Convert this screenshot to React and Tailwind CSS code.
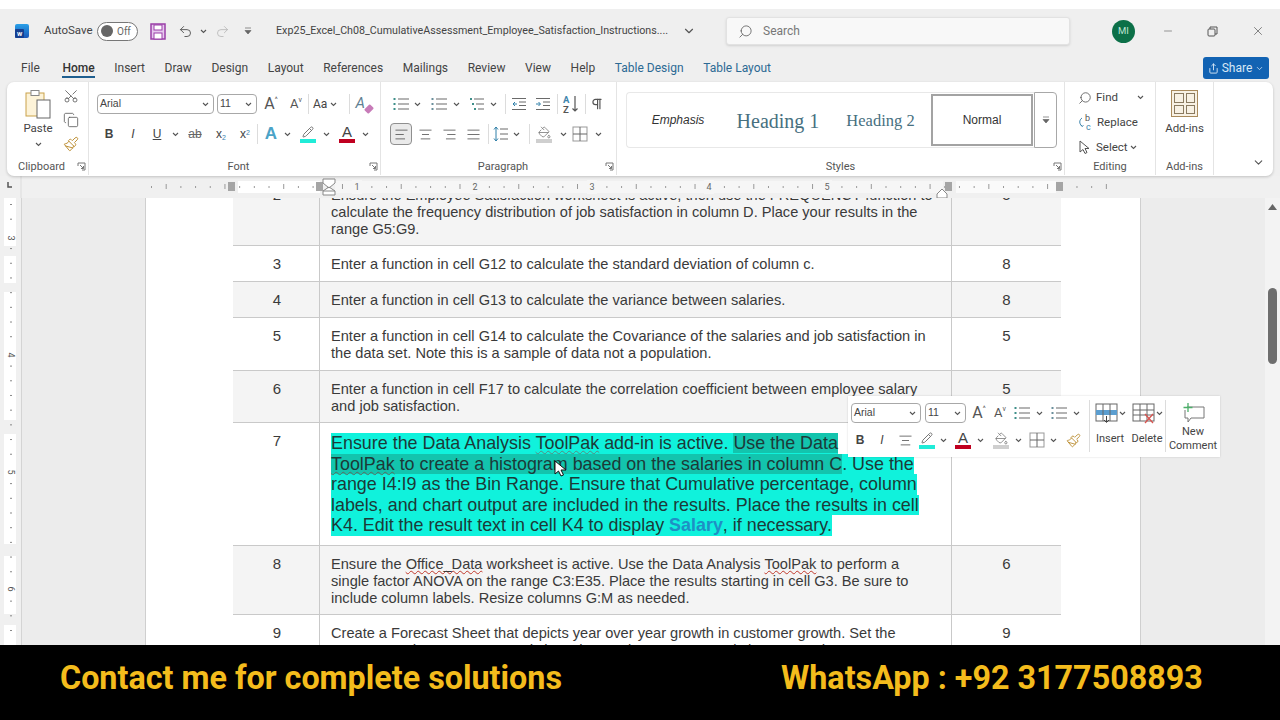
import React from 'react';
import { Search, Minus, X, Scissors, Copy, Paintbrush, ChevronDown, Share, Pilcrow, Pencil, PaintBucket, AlignLeft, AlignCenter, AlignRight, AlignJustify, Undo2, Redo2 } from 'lucide-react';

const Chev = ({ className = '' }) => (
  <svg width="7" height="5" viewBox="0 0 7 5" className={className}>
    <path d="M1 1l2.5 2.5L6 1" fill="none" stroke="#555" strokeWidth="1.1" />
  </svg>
);

const Launcher = () => (
  <svg width="9" height="9" viewBox="0 0 9 9" className="absolute right-[2px] top-[3px]">
    <path d="M1 4V1h7v7H5" fill="none" stroke="#777" />
    <path d="M3 3l3.5 3.5M6.5 4v2.5H4" fill="none" stroke="#777" />
  </svg>
);

const Sep = ({ className = 'h-[22px]' }) => <div className={`w-px bg-[#dcdcdc] ${className}`} />;

const Cell = ({ className = 'w-[24px]', children }) => (
  <div className={`flex items-center justify-center shrink-0 ${className}`}>{children}</div>
);

const ListIcon = ({ nums = false, indent = false }) => (
  <svg width="16" height="16" viewBox="0 0 16 16">
    {[3, 8, 13].map((y, i) => (
      <g key={y}>
        <rect x={indent ? i * 2 : 0.5} y={y - 1} width="2" height="2" fill={nums ? '#6b8f9c' : '#3f8f8a'} />
        <rect x={indent ? i * 2 + 4 : 5} y={y - 0.5} width={indent ? 10 - i * 2 : 11} height="1" fill="#6a6a6a" />
      </g>
    ))}
  </svg>
);

const IndentIcon = ({ inc = false }) => (
  <svg width="16" height="14" viewBox="0 0 16 14">
    <path d="M1 1.5h14M8 5h7M8 8.5h7M1 12.5h14" stroke="#6a6a6a" fill="none" />
    <path d={inc ? 'M1 7h4M3.5 5l2 2-2 2' : 'M6 7H2M4 5L2 7l2 2'} stroke="#2f7fa8" fill="none" />
  </svg>
);

const GridIcon = () => (
  <svg width="16" height="16" viewBox="0 0 16 16">
    <rect x="1" y="1" width="14" height="14" fill="none" stroke="#999" />
    <path d="M8 1v14M1 8h14" stroke="#666" />
  </svg>
);

const LineSpacing = () => (
  <svg width="16" height="16" viewBox="0 0 16 16">
    <path d="M3 1v14M1 3.500L3 1l2 2.500M1 12.500L3 15l2-2.500" fill="none" stroke="#2f7fa8" />
    <path d="M7 3h8M7 8h8M7 13h8" stroke="#6a6a6a" />
  </svg>
);

const SortIcon = () => (
  <svg width="18" height="20" viewBox="0 0 18 20">
    <text x="1" y="9" fontSize="9.500" fontWeight="700" fill="#3f86ad" fontFamily="Roboto, sans-serif">A</text>
    <text x="1" y="18.500" fontSize="9.500" fontWeight="700" fill="#555" fontFamily="Roboto, sans-serif">Z</text>
    <path d="M13 2v15M10.500 14.500L13 17l2.500-2.500" fill="none" stroke="#555" strokeWidth="1.200" />
  </svg>
);

const ClearFormat = () => (
  <div className="relative w-[17px] h-[17px]">
    <span className="absolute left-0 top-[-1px] text-[15px] leading-[17px] italic text-[#5f7f92]">A</span>
    <div className="absolute right-0 bottom-[1px] w-[8px] h-[6px] -rotate-45 rounded-[1px] bg-[#c77bb8]" />
  </div>
);

const ReplaceIcon = () => (
  <svg width="15" height="17" viewBox="0 0 15 17">
    <text x="7" y="7" fontSize="9" fill="#555" fontFamily="Roboto, sans-serif">b</text>
    <text x="8" y="15.500" fontSize="9" fill="#3f86ad" fontFamily="Roboto, sans-serif">c</text>
    <path d="M4 4C1 6 1 10 4 12M2.500 10.500L4 12.500l1.500-1" fill="none" stroke="#3f86ad" />
  </svg>
);

const ColorBar = ({ color, children }) => (
  <div className="flex flex-col items-center w-[18px]">
    <div className="h-[14px] flex items-center justify-center">{children}</div>
    <div className={`w-[16px] h-[4px] ${color}`} />
  </div>
);

const FontA = () => <span className="text-[15px] leading-[14px] text-[#444]">A</span>;

const Combo = ({ className, label }) => (
  <div className={`h-[20px] border border-[#a8a8a8] rounded-[4px] bg-white flex items-center justify-between pl-[2px] pr-[4px] text-[10.5px] text-[#444] font-['Liberation_Sans',sans-serif] ${className}`}>
    <span>{label}</span>
    <Chev />
  </div>
);

const GrowA = ({ small = false, mark }) => (
  <div className="flex items-start text-[#555]">
    <span className={small ? 'text-[13px] leading-[16px]' : 'text-[16px] leading-[16px]'}>A</span>
    <span className="text-[7px] leading-[8px]">{mark}</span>
  </div>
);

const GroupLabel = ({ children, launcher = false, className = '' }) => (
  <div className={`relative mt-auto h-[16px] flex items-center justify-center text-[11px] text-[#555] ${className}`}>
    {children}
    {launcher && <Launcher />}
  </div>
);

function TitleBar() {
  return (
    <div className="h-[40px] pt-[4px] bg-[#efefef] flex items-center text-[11.5px] text-[#444]">
      <div className="ml-[15px] w-[14px] h-[14px] rounded-[2px] bg-gradient-to-b from-[#2aa0e8] to-[#1b56b8] flex items-end">
        <span className="w-[9px] h-[9px] bg-[#153f91] rounded-[1px] text-white text-[6px] leading-[9px] text-center font-bold">W</span>
      </div>
      <span className="ml-[15px] w-[46px]">AutoSave</span>
      <div className="ml-[7px] w-[41px] h-[19px] rounded-full border border-[#777] bg-white flex items-center pl-[3px] gap-[4px]">
        <div className="w-[12px] h-[12px] rounded-full bg-[#666]" />
        <span className="text-[10px] text-[#666]">Off</span>
      </div>
      <svg width="16" height="17" viewBox="0 0 16 17" className="ml-[12px]">
        <rect x="1" y="1" width="14" height="15" fill="#e6c9ee" stroke="#9a3ea8" strokeWidth="1.5" />
        <rect x="4" y="2" width="8" height="5" fill="#fff" stroke="#9a3ea8" />
        <rect x="4" y="10" width="8" height="6" fill="#fff" stroke="#9a3ea8" />
      </svg>
      <Undo2 size={15} strokeWidth={1.5} className="ml-[12px] text-[#555]" />
      <Chev className="ml-[7px]" />
      <Redo2 size={15} strokeWidth={1.3} className="ml-[8px] text-[#b5b5b5]" />
      <svg width="8" height="8" viewBox="0 0 8 8" className="ml-[14px]">
        <path d="M1 1h6M1 3.5h6L4 7z" fill="#666" stroke="#666" strokeWidth="0.7" />
      </svg>
      <span className="ml-[24px] w-[399px] text-[10.7px] whitespace-nowrap overflow-hidden">Exp25_Excel_Ch08_CumulativeAssessment_Employee_Satisfaction_Instructions....</span>
      <ChevronDown size={14} className="ml-[7px] text-[#555]" />
      <div className="ml-[30px] w-[344px] h-[28px] bg-[#f8f8f8] border border-[#e2e2e2] rounded-[3px] shadow-sm flex items-center pl-[11px] gap-[10px] text-[12px] text-[#777]">
        <Search size={15} strokeWidth={1.4} className="-scale-x-100 text-[#666]" />
        <span>Search</span>
      </div>
      <div className="ml-[42px] w-[23px] h-[23px] rounded-full bg-[#0c7048] flex items-center justify-center text-[9.5px] text-[#bfe3d2]">MI</div>
      <Minus size={12} strokeWidth={1.2} className="ml-[27px] text-[#555]" />
      <svg width="11" height="11" viewBox="0 0 11 11" className="ml-[33px]">
        <rect x="1" y="3" width="7" height="7" rx="1" fill="none" stroke="#555" />
        <path d="M3 3V1h7v7H8" fill="none" stroke="#555" />
      </svg>
      <X size={14} strokeWidth={1.2} className="ml-[33px] text-[#555]" />
    </div>
  );
}

const tabs = ['File', 'Home', 'Insert', 'Draw', 'Design', 'Layout', 'References', 'Mailings', 'Review', 'View', 'Help'];

function TabBar() {
  return (
    <div className="h-[33px] pt-[5px] bg-[#efefef] flex items-center pl-[21px] gap-[19.6px] text-[12px] text-[#444] relative">
      {tabs.map((t, i) => (
        <div key={t} className={`relative ${i === 0 ? 'mr-[3px]' : ''} ${t === 'Home' ? 'font-medium text-[#333]' : ''}`}>
          {t}
          {t === 'Home' && <div className="absolute left-0 right-0 -bottom-[1px] h-[2px] bg-[#1f5f8f]" />}
        </div>
      ))}
      <span className="text-[#2c6a94]">Table Design</span>
      <span className="text-[#2c6a94]">Table Layout</span>
      <div className="ml-auto mr-[11px] w-[66px] h-[22px] rounded-[3px] bg-[#1263b3] text-[#d8e8f6] flex items-center justify-center gap-[3px]">
        <Share size={11} />
        <span>Share</span>
        <ChevronDown size={9} />
      </div>
    </div>
  );
}

function Ribbon() {
  return (
    <div className="relative z-10 mx-[7px] h-[94px] bg-white rounded-[7px] shadow-[0_1px_3px_rgba(0,0,0,0.2)] flex text-[#444]">
      {/* clipboard */}
      <div className="w-[82px] flex flex-col border-r border-[#e4e4e4] h-[93px]">
        <div className="flex h-[70px]">
          <div className="w-[50px] ml-[6px] flex flex-col items-center pt-[7px]">
            <svg width="28" height="31" viewBox="0 0 28 31">
              <rect x="2" y="4" width="18" height="23" fill="#fdf3d8" stroke="#c9a24a" />
              <rect x="7" y="1.5" width="8" height="5" fill="#fff" stroke="#888" />
              <rect x="13" y="11" width="13" height="18" fill="#fff" stroke="#666" />
            </svg>
            <span className="text-[11.500px] leading-[14px] mt-[1px]">Paste</span>
            <Chev className="mt-[7px]" />
          </div>
          <div className="flex flex-col items-center gap-[8px] pt-[6px]">
            <Scissors size={16} strokeWidth={1.2} className="-rotate-90 text-[#555]" />
            <Copy size={16} strokeWidth={1.2} className="text-[#555]" />
            <Paintbrush size={16} strokeWidth={1.4} className="text-[#b98a2c]" />
          </div>
        </div>
        <GroupLabel launcher className="pr-[12px]">Clipboard</GroupLabel>
      </div>
      {/* font */}
      <div className="w-[292px] flex flex-col pl-[8px] border-r border-[#e4e4e4] h-[93px]">
        <div className="flex items-center mt-[12px] h-[20px]">
          <Combo className="w-[117px]" label="Arial" />
          <Combo className="w-[40px] ml-[3px]" label="11" />
          <Cell className="w-[20px] ml-[4px]"><GrowA mark="^" /></Cell>
          <Cell className="w-[20px] ml-[5px]"><GrowA small mark="v" /></Cell>
          <Sep className="h-[20px] ml-[2px]" />
          <div className="w-[34px] ml-[4px] flex items-center gap-[3px] text-[12px]">Aa<Chev /></div>
          <Sep className="h-[20px] ml-[2px]" />
          <Cell className="w-[20px] ml-[4px]"><ClearFormat /></Cell>
        </div>
        <div className="flex items-center mt-[9px] h-[22px] text-[12px] font-['Liberation_Sans',sans-serif]">
          <Cell><span className="font-bold">B</span></Cell>
          <Cell><span className="italic">I</span></Cell>
          <Cell><span className="underline">U</span></Cell>
          <Cell className="w-[12px]"><Chev /></Cell>
          <Cell className="w-[24px] ml-[2px]"><span className="line-through text-[#666]">ab</span></Cell>
          <Cell className="w-[24px] ml-[2px]"><span>x<sub className="text-[7px] text-[#3b82b0]">2</sub></span></Cell>
          <Cell><span>x<sup className="text-[7px] text-[#3b82b0]">2</sup></span></Cell>
          <Sep className="h-[20px]" />
          <Cell className="w-[26px]"><span className="text-[17px] font-bold text-[#4ba3c7]">A</span></Cell>
          <Cell className="w-[12px] -ml-[3px]"><Chev /></Cell>
          <Cell className="w-[24px] ml-[3px]">
            <ColorBar color="bg-[#20ecd8]"><Pencil size={12} className="text-[#777]" /></ColorBar>
          </Cell>
          <Cell className="w-[12px]"><Chev /></Cell>
          <Cell className="w-[24px] ml-[3px]"><ColorBar color="bg-[#c00020]"><FontA /></ColorBar></Cell>
          <Cell className="w-[12px]"><Chev /></Cell>
        </div>
        <GroupLabel launcher>Font</GroupLabel>
      </div>
      {/* paragraph */}
      <div className="w-[236px] flex flex-col pl-[9px] border-r border-[#e4e4e4] h-[93px]">
        <div className="flex items-center mt-[14px] h-[16px]">
          <Cell className="w-[22px]"><ListIcon /></Cell>
          <Cell className="w-[12px] -ml-[1px] mr-[5px]"><Chev /></Cell>
          <Cell className="w-[22px]"><ListIcon nums /></Cell>
          <Cell className="w-[12px] mr-[5px]"><Chev /></Cell>
          <Cell className="w-[22px]"><ListIcon indent /></Cell>
          <Cell className="w-[12px] -ml-[2px]"><Chev /></Cell>
          <Sep className="h-[20px] ml-[6px]" />
          <Cell className="w-[24px] ml-[1px]"><IndentIcon /></Cell>
          <Cell className="w-[24px]"><IndentIcon inc /></Cell>
          <Sep className="h-[20px] ml-[2px]" />
          <Cell className="w-[26px]"><SortIcon /></Cell>
          <Sep className="h-[20px] ml-[1px]" />
          <Cell className="w-[22px]"><Pilcrow size={14} strokeWidth={2} className="text-[#555]" /></Cell>
        </div>
        <div className="flex items-center mt-[11px] h-[22px]">
          <Cell className="w-[22px] h-[22px] bg-[#eaeaea] border border-[#8f8f8f] rounded-[4px]"><AlignLeft size={15} strokeWidth={1.2} /></Cell>
          <Cell className="w-[24px] ml-[1px]"><AlignCenter size={15} strokeWidth={1.2} /></Cell>
          <Cell><AlignRight size={15} strokeWidth={1.2} /></Cell>
          <Cell><AlignJustify size={15} strokeWidth={1.2} /></Cell>
          <Sep className="h-[20px] ml-[3px]" />
          <Cell className="w-[22px] ml-[1px]"><LineSpacing /></Cell>
          <Cell className="w-[12px] -ml-[2px]"><Chev /></Cell>
          <Sep className="h-[20px] ml-[7px]" />
          <Cell className="w-[26px] ml-[1px]"><ColorBar color="bg-[#cfcfcf]"><PaintBucket size={13} strokeWidth={1.3} className="text-[#666]" /></ColorBar></Cell>
          <Cell className="w-[12px]"><Chev /></Cell>
          <Cell className="w-[24px] -ml-[1px]"><GridIcon /></Cell>
          <Cell className="w-[12px]"><Chev /></Cell>
        </div>
        <GroupLabel launcher>Paragraph</GroupLabel>
      </div>
      {/* styles */}
      <div className="w-[448px] flex flex-col border-r border-[#e4e4e4] h-[93px]">
        <div className="flex items-stretch mt-[10px] ml-[9px] w-[431px] h-[56px]">
          <div className="flex-1 border border-[#e8e8e8] border-r-0 rounded-l-[4px] flex items-center">
            <div className="w-[102px] text-center text-[12px] italic font-['Liberation_Sans',sans-serif] text-[#333]">Emphasis</div>
            <div className="w-[98px] text-center text-[20px] pt-[2px] font-['Liberation_Serif',serif] text-[#47707f]">Heading 1</div>
            <div className="w-[104px] pl-[3px] text-center text-[16.500px] pt-[2px] font-['Liberation_Serif',serif] text-[#47707f]">Heading 2</div>
            <div className="w-[102px] h-[52px] border-2 border-[#a3a3a3] flex items-center justify-center text-[12px] font-['Liberation_Sans',sans-serif] text-[#333]">Normal</div>
          </div>
          <div className="w-[23px] border border-[#a8a8a8] rounded-r-[4px] flex items-center justify-center">
            <svg width="8" height="8" viewBox="0 0 8 8">
              <path d="M1 1h6M1 3.5h6L4 7z" fill="#666" stroke="#666" strokeWidth="0.7" />
            </svg>
          </div>
        </div>
        <GroupLabel launcher>Styles</GroupLabel>
      </div>
      {/* editing */}
      <div className="w-[91px] flex flex-col border-r border-[#e4e4e4] h-[93px] text-[11.500px]">
        <div className="flex flex-col pl-[13px] pt-[7px] gap-[8px]">
          <div className="flex items-center h-[17px] gap-[4px]">
            <Search size={14} strokeWidth={1.4} className="-scale-x-100 text-[#555]" />
            <span>Find</span>
            <Chev className="ml-[15px]" />
          </div>
          <div className="flex items-center h-[17px] gap-[4px]">
            <ReplaceIcon />
            <span>Replace</span>
          </div>
          <div className="flex items-center h-[17px] gap-[5px]">
            <svg width="13" height="15" viewBox="0 0 13 15">
              <path d="M2 1v11l3-2.500 2 4 2-1-2-4h4z" fill="#fff" stroke="#555" />
            </svg>
            <span>Select</span>
            <Chev className="-ml-[3px]" />
          </div>
        </div>
        <GroupLabel>Editing</GroupLabel>
      </div>
      {/* add-ins */}
      <div className="w-[58px] flex flex-col items-center border-r border-[#e4e4e4] h-[93px] text-[11.500px]">
        <div className="mt-[8px] w-[27px] h-[27px] border border-[#a98a5c] bg-[#f8f1e4] grid grid-cols-2 grid-rows-2 gap-[2px] p-[2px]">
          <div className="border border-[#8a7a60]" />
          <div className="border border-[#8a7a60]" />
          <div className="border border-[#8a7a60]" />
          <div className="border border-[#8a7a60]" />
        </div>
        <span className="mt-[3px]">Add-ins</span>
        <GroupLabel className="w-full">Add-ins</GroupLabel>
      </div>
      <ChevronDown size={13} className="ml-auto mr-[8px] mt-[74px] text-[#555]" />
    </div>
  );
}

const hTicks = Array.from({ length: 66 }, (_, i) => 151 + i * 14.69);
const hNums = [['1', 357], ['2', 475], ['3', 592], ['4', 709], ['5', 827]];

function HRuler() {
  return (
    <svg width="1280" height="22" className="block bg-[#f0f0f0]">
      <rect x="238" y="5" width="82" height="12" fill="#ffffff" />
      <rect x="335" y="5" width="608" height="12" fill="#f6f6f6" />
      <rect x="956" y="5" width="100" height="12" fill="#fafafa" />
      <path d="M8 6v5h4" stroke="#555" strokeWidth="1.5" fill="none" />
      <path d="M21 0v22" stroke="#dcdcdc" />
      {hTicks.map((x, i) => (
        <rect key={i} x={x} y={i % 4 === 1 ? 8 : 10} width="1" height={i % 4 === 1 ? 5 : 2} fill="#999" />
      ))}
      {hNums.map(([n, x]) => (
        <g key={n}>
          <rect x={x - 5} y="4" width="10" height="14" fill="#f6f6f6" />
          <text x={x} y="14" textAnchor="middle" fontSize="9" fill="#666" fontFamily="Roboto, sans-serif">{n}</text>
        </g>
      ))}
      {[231, 319, 948, 1059].map((x) => (
        <rect key={x} x={x - 3} y="6" width="7" height="9" fill="#a5a5a5" />
      ))}
      <path d="M323 3h12v4l-6 5-6-5zM323 19v-4l6-4 6 4v4zM323 15h12" fill="#fff" stroke="#888" />
      <path d="M937 22v-4l5-5 5 5v4z" fill="#fff" stroke="#888" />
    </svg>
  );
}

const vBlocks = [[0, 48], [58, 27], [94, 128], [236, 110], [358, 58], [427, 20]];
const vTicks = Array.from({ length: 30 }, (_, i) => 6 + i * 14.69);
const vNums = [['3', 40], ['4', 157], ['5', 274], ['6', 391]];

function VRuler() {
  return (
    <svg width="22" height="447" className="block shrink-0 bg-[#f0f0f0] border-r border-[#d4d4d4]">
      {vBlocks.map(([y, h]) => (
        <rect key={y} x="4" y={y} width="12" height={h} fill="#fff" />
      ))}
      {vTicks.map((y) => (
        <rect key={y} x="10" y={y} width="2" height="1" fill="#888" />
      ))}
      {vNums.map(([n, y]) => (
        <g key={n}>
          <rect x="5" y={y - 5} width="10" height="10" fill="#fff" />
          <text x="10" y={y} textAnchor="middle" fontSize="9" fill="#555" fontFamily="Roboto, sans-serif" transform={`rotate(90 10 ${y})`} dominantBaseline="middle">{n}</text>
        </g>
      ))}
    </svg>
  );
}

const squiggle = 'underline decoration-wavy decoration-[#c0392b] decoration-1 underline-offset-1';

const rows = [
  {
    n: '2', pts: '5', h: 'h-[69px]', shade: true,
    text: [<>Ensure the Employee Satisfaction worksheet is active, then use the FREQUENCY function to</>, <>calculate the frequency distribution of job satisfaction in column D. Place your results in the</>, <>range G5:G9.</>],
  },
  { n: '3', pts: '8', h: 'h-[36px]', text: [<>Enter a function in cell G12 to calculate the standard deviation of column c.</>] },
  { n: '4', pts: '8', h: 'h-[36px]', shade: true, text: [<>Enter a function in cell G13 to calculate the variance between salaries.</>] },
  {
    n: '5', pts: '5', h: 'h-[53px]',
    text: [<>Enter a function in cell G14 to calculate the Covariance of the salaries and job satisfaction in</>, <>the data set. Note this is a sample of data not a population.</>],
  },
  {
    n: '6', pts: '5', h: 'h-[52px]', shade: true,
    text: [<>Enter a function in cell F17 to calculate the correlation coefficient between employee salary</>, <>and job satisfaction.</>],
  },
];

const rows2 = [
  {
    n: '8', pts: '6', h: 'h-[69px]', shade: true,
    text: [<>Ensure the <span className={squiggle}>Office_Data</span> worksheet is active. Use the Data Analysis <span className={squiggle}>ToolPak</span> to perform a</>, <>single factor ANOVA on the range C3:E35. Place the results starting in cell G3. Be sure to</>, <>include column labels. Resize columns G:M as needed.</>],
  },
  {
    n: '9', pts: '9', h: 'h-[70px]',
    text: [<>Create a Forecast Sheet that depicts year over year growth in customer growth. Set the</>, <>Forecast end year as 2035 and show the results on a new worksheet named <span className="text-[#2aa6a0]">2035</span> Forecast.</>],
  },
];

const Row = ({ r }) => (
  <div className={`grid grid-cols-[86px_633px_109px] border-b border-[#c9c9c9] text-[14.6px] leading-[17px] text-[#3a3a3a] ${r.h} ${r.shade ? 'bg-[#f4f4f4]' : 'bg-white'}`}>
    <div className="text-center pl-[2px] pt-[9px] text-[15px]">{r.n}</div>
    <div className="border-x border-[#c9c9c9] pl-[11px] pt-[10px] whitespace-nowrap overflow-hidden">
      {r.text.map((t, i) => <div key={i}>{t}</div>)}
    </div>
    <div className="text-center pt-[9px] text-[15px]">{r.pts}</div>
  </div>
);

const cyanLines = [
  <>Ensure the Data Analysis <span className="underline decoration-wavy decoration-[#5a8a80] decoration-1 underline-offset-1">ToolPak</span> add-in is active. <span className="bg-[#13c4ad]">Use the Data</span></>,
  <><span className="bg-[#13c4ad]"><span className="underline decoration-wavy decoration-[#5a6a60] decoration-1 underline-offset-1">ToolPak</span> to create a histogram based on the salaries in column C</span>. Use the</>,
  <>range I4:I9 as the Bin Range. Ensure that Cumulative percentage, column</>,
  <>labels, and chart output are included in the results. Place the results in cell</>,
  <>K4. Edit the result text in cell K4 to display <span className="text-[#1f8fc4] font-bold">Salary</span>, if necessary.</>,
];

function HighlightRow() {
  return (
    <div className="grid grid-cols-[86px_633px_109px] h-[123px] border-b border-[#c9c9c9] bg-white text-[#3a3a3a]">
      <div className="text-center pl-[2px] pt-[9px] text-[15px] leading-[17px]">7</div>
      <div className="border-x border-[#c9c9c9] pl-[11px] pt-[10px] text-[17.9px] leading-[20.500px] whitespace-nowrap text-[#1c3a38]">
        {cyanLines.map((l, i) => <div key={i} className="w-fit bg-[#10f2dc]">{l}</div>)}
      </div>
      <div />
    </div>
  );
}

function MiniToolbar() {
  return (
    <div className="absolute left-[848px] top-[198px] w-[372px] h-[61px] bg-white shadow-[0_0_2px_rgba(0,0,0,0.15)] flex text-[#444]">
      <div className="w-[241px] pl-[3px] pt-[7px]">
        <div className="flex items-center h-[20px]">
          <Combo className="w-[70px]" label="Arial" />
          <Combo className="w-[41px] ml-[4px]" label="11" />
          <Cell className="w-[20px] ml-[3px]"><GrowA mark="^" /></Cell>
          <Cell className="w-[20px] ml-[1px]"><GrowA small mark="v" /></Cell>
          <Cell className="w-[20px] ml-[2px]"><ListIcon /></Cell>
          <Cell className="w-[12px] ml-[1px]"><Chev /></Cell>
          <Cell className="w-[20px] ml-[4px]"><ListIcon nums /></Cell>
          <Cell className="w-[12px] ml-[1px]"><Chev /></Cell>
        </div>
        <div className="flex items-center h-[22px] mt-[6px] text-[12px] font-['Liberation_Sans',sans-serif]">
          <Cell className="w-[18px]"><span className="font-bold">B</span></Cell>
          <Cell className="w-[18px] ml-[4px]"><span className="italic">I</span></Cell>
          <Cell className="w-[18px] ml-[5px]"><AlignCenter size={15} strokeWidth={1.2} /></Cell>
          <Cell className="w-[20px] ml-[3px]"><ColorBar color="bg-[#20ecd8]"><Pencil size={12} className="text-[#777]" /></ColorBar></Cell>
          <Cell className="w-[12px]"><Chev /></Cell>
          <Cell className="w-[22px] ml-[3px]"><ColorBar color="bg-[#c00020]"><FontA /></ColorBar></Cell>
          <Cell className="w-[12px]"><Chev /></Cell>
          <Cell className="w-[22px] ml-[4px]"><ColorBar color="bg-[#cfcfcf]"><PaintBucket size={13} strokeWidth={1.3} className="text-[#666]" /></ColorBar></Cell>
          <Cell className="w-[12px]"><Chev /></Cell>
          <Cell className="w-[20px] ml-[3px]"><GridIcon /></Cell>
          <Cell className="w-[12px]"><Chev /></Cell>
          <Cell className="w-[20px] ml-[4px]"><Paintbrush size={15} strokeWidth={1.4} className="text-[#b98a2c]" /></Cell>
        </div>
      </div>
      <Sep className="h-[52px] mt-[4px]" />
      <div className="w-[38px] flex flex-col items-center pt-[7px] text-[11px] ml-[1px]">
        <div className="flex items-center gap-[1px]">
          <svg width="23" height="21" viewBox="0 0 23 21">
            <rect x="1" y="1" width="21" height="17" fill="#fff" stroke="#666" />
            <rect x="1" y="7" width="21" height="5" fill="#5b9ed0" />
            <path d="M8 1v17M15 1v17" stroke="#666" />
            <path d="M11.500 13v6M9 17l2.500 2.500L14 17" stroke="#444" fill="none" />
          </svg>
          <Chev />
        </div>
        <span className="mt-[7px]">Insert</span>
      </div>
      <div className="w-[36px] flex flex-col items-center pt-[7px] text-[11px]">
        <div className="flex items-center gap-[1px]">
          <svg width="23" height="21" viewBox="0 0 23 21">
            <rect x="1" y="1" width="21" height="17" fill="#fff" stroke="#666" />
            <path d="M8 1v17M15 1v17M1 7h21M1 12h21" stroke="#666" />
            <path d="M13 11l8 9M21 11l-8 9" stroke="#d9534f" strokeWidth="1.3" />
          </svg>
          <Chev />
        </div>
        <span className="mt-[7px]">Delete</span>
      </div>
      <Sep className="h-[52px] mt-[4px]" />
      <div className="flex-1 flex flex-col items-center pt-[6px] text-[11px] leading-[14px]">
        <svg width="23" height="22" viewBox="0 0 23 22">
          <path d="M5 5h17v11H9l-3 4v-4H3V8" fill="#fff" stroke="#777" />
          <path d="M6 1v9M1.500 5.500h9" stroke="#4caf6a" strokeWidth="1.3" />
        </svg>
        <span className="mt-[1px]">New</span>
        <span>Comment</span>
      </div>
    </div>
  );
}

function DocArea() {
  return (
    <div className="relative h-[447px] flex overflow-hidden bg-[#ececec]">
      <VRuler />
      <div className="w-[123px] shrink-0 bg-[#ececec]" />
      <div className="w-[996px] shrink-0 bg-white border-x border-[#cfcfcf] pl-[87px] font-['Liberation_Sans',sans-serif]">
        <div className="w-[828px] -mt-[21px]">
          {rows.map((r) => <Row key={r.n} r={r} />)}
          <HighlightRow />
          {rows2.map((r) => <Row key={r.n} r={r} />)}
        </div>
      </div>
      <div className="flex-1" />
      <div className="w-[15px] shrink-0 bg-[#f3f3f3] flex flex-col items-center pt-[6px]">
        <svg width="9" height="6" viewBox="0 0 9 6"><path d="M4.500 0L9 6H0z" fill="#666" /></svg>
        <div className="w-[9px] h-[76px] mt-[78px] rounded-full bg-[#6e6e6e]" />
      </div>
      <MiniToolbar />
      <svg width="14" height="18" viewBox="0 0 14 18" className="absolute left-[554px] top-[262px]">
        <path d="M1 1v13l3.500-3 2.500 5 2.500-1-2.500-5H12z" fill="#fff" stroke="#111" />
      </svg>
    </div>
  );
}

export default function App() {
  return (
    <div className="w-[1280px] h-[720px] overflow-hidden bg-white font-['Roboto',sans-serif]">
      <div className="h-[9px] bg-white" />
      <TitleBar />
      <TabBar />
      <div className="bg-[#efefef]"><Ribbon /></div>
      <HRuler />
      <DocArea />
      <div className="h-[75px] bg-black flex items-center pb-[9px] pl-[60px] font-bold text-[#f4bc1c] text-[32.3px] whitespace-nowrap">
        <span className="w-[721px]">Contact me for complete solutions</span>
        <span>WhatsApp : +92 3177508893</span>
      </div>
    </div>
  );
}
